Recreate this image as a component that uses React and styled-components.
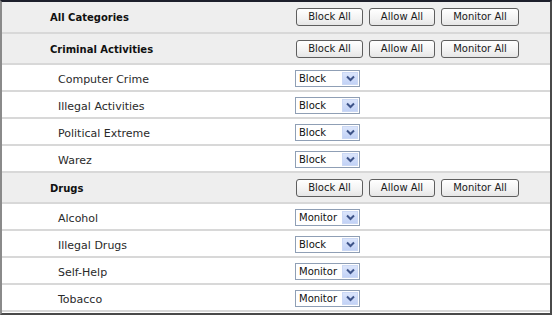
import React from "react";
import styled, { createGlobalStyle } from "styled-components";

const GlobalStyle = createGlobalStyle`
  html, body {
    margin: 0;
    padding: 0;
    background: #ffffff;
  }
`;

const Frame = styled.div`
  width: 552px;
  height: 315px;
  box-sizing: border-box;
  padding-top: 1px;
  border-top: 2px solid #1d1f2b;
  border-left: 2px solid #8a8a8a;
  border-right: 2px solid #4a4a4a;
  border-bottom: 2px solid #4a4a4a;
  background: #ffffff;
  overflow: hidden;
  font-family: "DejaVu Sans", Verdana, sans-serif;
  color: #1a1a1a;
`;

const Row = styled.div`
  display: grid;
  grid-template-columns: 294px 1fr;
  align-items: center;
  height: ${(p) => (p.$header ? "29px" : "25px")};
  background: ${(p) => (p.$header ? "#eeeeee" : "#ffffff")};
  border-bottom: 2px solid #d8d8d8;

  &:first-child {
    margin-top: -1px;
    height: 30px;
  }
`;

const Label = styled.div`
  padding-left: ${(p) => (p.$header ? "48px" : "56px")};
  padding-top: ${(p) => (p.$header ? "1px" : "3px")};
  font-size: ${(p) => (p.$header ? "10px" : "11px")};
  font-weight: ${(p) => (p.$header ? "bold" : "normal")};
  color: ${(p) => (p.$header ? "#111111" : "#2a2a2a")};
  white-space: nowrap;
`;

const Actions = styled.div`
  display: flex;
  align-items: center;
  gap: 6px;
  padding-top: ${(p) => (p.$header ? "0" : "2px")};
`;

const Button = styled.button`
  box-sizing: border-box;
  height: 18px;
  width: ${(p) => p.$w}px;
  padding: 0;
  border: 1px solid #5e5e5e;
  border-radius: 3px;
  background: linear-gradient(#ffffff, #f2f2f2 60%, #e6e6e6);
  font-family: "DejaVu Sans", Verdana, sans-serif;
  font-size: 10px;
  color: #1a1a1a;
  line-height: 16px;
  text-align: center;
`;

const Select = styled.div`
  box-sizing: border-box;
  width: 65px;
  height: 17px;
  margin-left: -1px;
  border: 1px solid #8f9fb5;
  background: #ffffff;
  display: flex;
  align-items: center;
  justify-content: space-between;
  padding: 0 1px 0 3px;
  font-size: 10px;
  color: #111111;
`;

const ArrowBox = styled.span`
  box-sizing: border-box;
  width: 16px;
  height: 13px;
  background: linear-gradient(#dbe5fb, #c2d2f6);
  border: 1px solid #cbd8f4;
  display: flex;
  align-items: center;
  justify-content: center;
`;

const Chevron = () => (
  <svg width="9" height="7" viewBox="0 0 9 7">
    <path d="M1 1.5 L4.5 5 L8 1.5" fill="none" stroke="#3e5489" strokeWidth="2" />
  </svg>
);

const data = [
  { group: "All Categories", items: [] },
  {
    group: "Criminal Activities",
    items: [
      ["Computer Crime", "Block"],
      ["Illegal Activities", "Block"],
      ["Political Extreme", "Block"],
      ["Warez", "Block"],
    ],
  },
  {
    group: "Drugs",
    items: [
      ["Alcohol", "Monitor"],
      ["Illegal Drugs", "Block"],
      ["Self-Help", "Monitor"],
      ["Tobacco", "Monitor"],
    ],
  },
];

const App = () => (
  <>
    <GlobalStyle />
    <Frame>
      {data.map((g) => (
        <React.Fragment key={g.group}>
          <Row $header>
            <Label $header>{g.group}</Label>
            <Actions $header>
              <Button $w={67}>Block All</Button>
              <Button $w={66}>Allow All</Button>
              <Button $w={78}>Monitor All</Button>
            </Actions>
          </Row>
          {g.items.map(([name, value]) => (
            <Row key={name}>
              <Label>{name}</Label>
              <Actions>
                <Select>
                  <span>{value}</span>
                  <ArrowBox>
                    <Chevron />
                  </ArrowBox>
                </Select>
              </Actions>
            </Row>
          ))}
        </React.Fragment>
      ))}
    </Frame>
  </>
);

export default App;
